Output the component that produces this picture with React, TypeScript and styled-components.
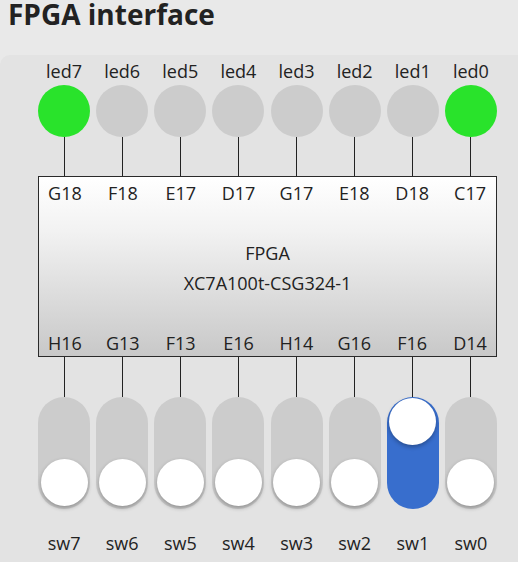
import React from "react";
import styled, { createGlobalStyle } from "styled-components";

const Global = createGlobalStyle`
  html, body {
    margin: 0;
    padding: 0;
    background: #e9e9e9;
    overflow: hidden;
  }
  body {
    font-family: "Open Sans", "Noto Sans", sans-serif;
    color: #222;
  }
`;

const Title = styled.h1`
  margin: 0 0 0 8px;
  font-size: 28px;
  line-height: 28px;
  font-weight: 700;
  color: #222;
`;

const Panel = styled.div`
  margin-top: 27px;
  width: 100%;
  min-height: calc(100vh - 55px);
  background: #e3e3e3;
  border-radius: 10px 0 0 0;
  padding: 4px 0 0 38px;
  box-sizing: border-box;
`;

const Board = styled.div`
  width: 459px;
  display: flex;
  flex-direction: column;
`;

const Row = styled.div`
  display: grid;
  grid-template-columns: repeat(8, 1fr);
  column-gap: 6px;
`;

const Cell = styled.div`
  display: flex;
  flex-direction: column;
  align-items: center;
`;

const Label = styled.div<{ $gap?: number }>`
  font-size: 18px;
  line-height: 24px;
  margin-top: ${(p) => p.$gap ?? 0}px;
  text-align: center;
  white-space: nowrap;
`;

const Led = styled.div<{ $on: boolean }>`
  width: 52px;
  height: 52px;
  margin-top: 2px;
  border-radius: 50%;
  background: ${(p) => (p.$on ? "#29e32b" : "#cccccc")};
`;

const Wire = styled.div<{ $h: number }>`
  width: 1px;
  height: ${(p) => p.$h}px;
  background: #222;
`;

const Chip = styled.div`
  height: 181px;
  box-sizing: border-box;
  border: 1px solid #2a2a2a;
  background: linear-gradient(to bottom, #ffffff 0%, #f2f2f2 30%, #c8c8c8 100%);
  padding: 4px 0 1px;
  display: flex;
  flex-direction: column;
  justify-content: space-between;
`;

const ChipName = styled.div`
  text-align: center;
  font-size: 18px;
  line-height: 30px;
`;

const Switch = styled.div<{ $on: boolean }>`
  position: relative;
  width: 52px;
  height: 112px;
  border-radius: 26px;
  background: ${(p) => (p.$on ? "#386ecd" : "#cccccc")};
  cursor: pointer;
`;

const Knob = styled.div<{ $on: boolean }>`
  position: absolute;
  left: 50%;
  width: 47px;
  height: 47px;
  margin-left: -23.5px;
  border-radius: 50%;
  background: #fff;
  box-shadow: 0 2px 4px rgba(0, 0, 0, 0.3);
  ${(p) => (p.$on ? "top: 1px;" : "bottom: 3px;")}
`;

const leds = [
  { name: "led7", pin: "G18", on: true },
  { name: "led6", pin: "F18", on: false },
  { name: "led5", pin: "E17", on: false },
  { name: "led4", pin: "D17", on: false },
  { name: "led3", pin: "G17", on: false },
  { name: "led2", pin: "E18", on: false },
  { name: "led1", pin: "D18", on: false },
  { name: "led0", pin: "C17", on: true },
];

const switches = [
  { name: "sw7", pin: "H16", on: false },
  { name: "sw6", pin: "G13", on: false },
  { name: "sw5", pin: "F13", on: false },
  { name: "sw4", pin: "E16", on: false },
  { name: "sw3", pin: "H14", on: false },
  { name: "sw2", pin: "G16", on: false },
  { name: "sw1", pin: "F16", on: true },
  { name: "sw0", pin: "D14", on: false },
];

export default function App() {
  const [sw, setSw] = React.useState(switches.map((s) => s.on));
  return (
    <>
      <Global />
      <Title>FPGA interface</Title>
      <Panel>
        <Board>
          <Row>
            {leds.map((l) => (
              <Cell key={l.name}>
                <Label>{l.name}</Label>
                <Led $on={l.on} />
                <Wire $h={39} />
              </Cell>
            ))}
          </Row>
          <Chip>
            <Row>
              {leds.map((l) => (
                <Cell key={l.pin}>
                  <Label>{l.pin}</Label>
                </Cell>
              ))}
            </Row>
            <div>
              <ChipName>FPGA</ChipName>
              <ChipName>XC7A100t-CSG324-1</ChipName>
            </div>
            <Row>
              {switches.map((s) => (
                <Cell key={s.pin}>
                  <Label>{s.pin}</Label>
                </Cell>
              ))}
            </Row>
          </Chip>
          <Row>
            {switches.map((s, i) => (
              <Cell key={s.name}>
                <Wire $h={40} />
                <Switch
                  $on={sw[i]}
                  onClick={() => setSw((prev) => prev.map((v, j) => (j === i ? !v : v)))}
                >
                  <Knob $on={sw[i]} />
                </Switch>
                <Label $gap={22}>{s.name}</Label>
              </Cell>
            ))}
          </Row>
        </Board>
      </Panel>
    </>
  );
}
